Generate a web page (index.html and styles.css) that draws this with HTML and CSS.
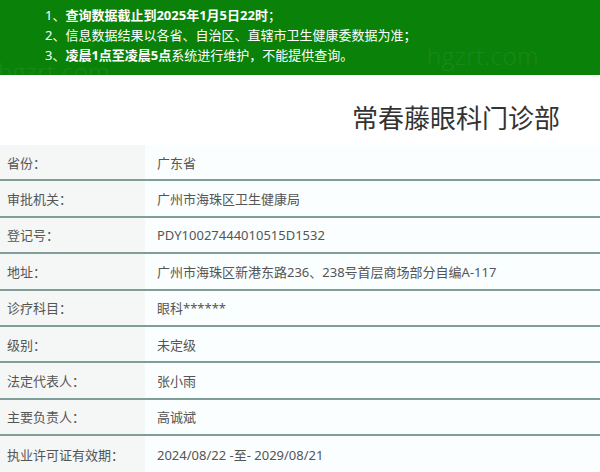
FILE: index.html
```html
<!DOCTYPE html>
<html lang="zh-CN">
<head>
<meta charset="utf-8">
<title>常春藤眼科门诊部</title>
<link rel="stylesheet" href="styles.css">
</head>
<body>
<div class="notice">
  <p class="line"><span class="num">1、</span><b>查询数据截止到2025年1月5日22时</b>；</p>
  <p class="line"><span class="num">2、</span>信息数据结果以各省、自治区、直辖市卫生健康委数据为准；</p>
  <p class="line"><span class="num">3、</span><b>凌晨1点至凌晨5点</b>系统进行维护，不能提供查询。</p>
  <span class="wm wm-left" aria-hidden="true">hgzrt.com</span>
  <span class="wm wm-right" aria-hidden="true">hgzrt.com</span>
</div>
<h1 class="title">常春藤眼科门诊部</h1>
<div class="info">
  <div class="row"><div class="label">省份：</div><div class="value">广东省</div></div>
  <div class="row"><div class="label">审批机关：</div><div class="value">广州市海珠区卫生健康局</div></div>
  <div class="row"><div class="label">登记号：</div><div class="value">PDY10027444010515D1532</div></div>
  <div class="row"><div class="label">地址：</div><div class="value">广州市海珠区新港东路236、238号首层商场部分自编A-117</div></div>
  <div class="row"><div class="label">诊疗科目：</div><div class="value">眼科******</div></div>
  <div class="row"><div class="label">级别：</div><div class="value">未定级</div></div>
  <div class="row"><div class="label">法定代表人：</div><div class="value">张小雨</div></div>
  <div class="row"><div class="label">主要负责人：</div><div class="value">高诚斌</div></div>
  <div class="row last"><div class="label">执业许可证有效期：</div><div class="value">2024/08/22 -至- 2029/08/21</div></div>
</div>
</body>
</html>
```

FILE: styles.css
```css
html, body {
  margin: 0;
  padding: 0;
  background: #ffffff;
}
body {
  width: 600px;
  height: 472px;
  overflow: hidden;
  font-family: "Noto Sans", "Noto Sans CJK SC", sans-serif;
  color: #555;
}
.notice {
  position: relative;
  background: #0a820a;
  height: 75px;
  box-sizing: border-box;
  padding: 5px 0 0 45px;
  overflow: hidden;
}
.line {
  position: relative;
  z-index: 1;
  margin: 0;
  font-size: 13px;
  line-height: 20px;
  color: #ffffff;
  white-space: nowrap;
}
.line b {
  font-weight: 700;
}
.wm {
  position: absolute;
  font-family: "Open Sans", sans-serif;
  font-weight: 300;
  font-size: 24px;
  line-height: 24px;
  color: rgba(255, 255, 255, 0.08);
  letter-spacing: 0.5px;
}
.wm-left {
  left: -2px;
  top: 60px;
}
.wm-right {
  left: 427px;
  top: 44px;
}
.title {
  margin: 0;
  height: 70px;
  box-sizing: border-box;
  padding: 24px 40px 0 0;
  text-align: right;
  font-family: "Noto Sans CJK SC", sans-serif;
  font-weight: 400;
  font-size: 26px;
  line-height: 36px;
  color: #333;
}
.info {
  display: flex;
  flex-direction: column;
}
.row {
  display: flex;
  height: 36.4px;
  box-sizing: border-box;
  border-bottom: 2px solid #7f9e97;
  font-size: 13px;
}
.row.last {
  border-bottom: none;
}
.label {
  width: 145px;
  flex: none;
  box-sizing: border-box;
  padding-left: 7px;
  background: #f5f6f6;
  display: flex;
  align-items: center;
  color: #555;
}
.value {
  flex: 1;
  padding-left: 12px;
  background: #fbfefe;
  display: flex;
  align-items: center;
  color: #555;
}
```
